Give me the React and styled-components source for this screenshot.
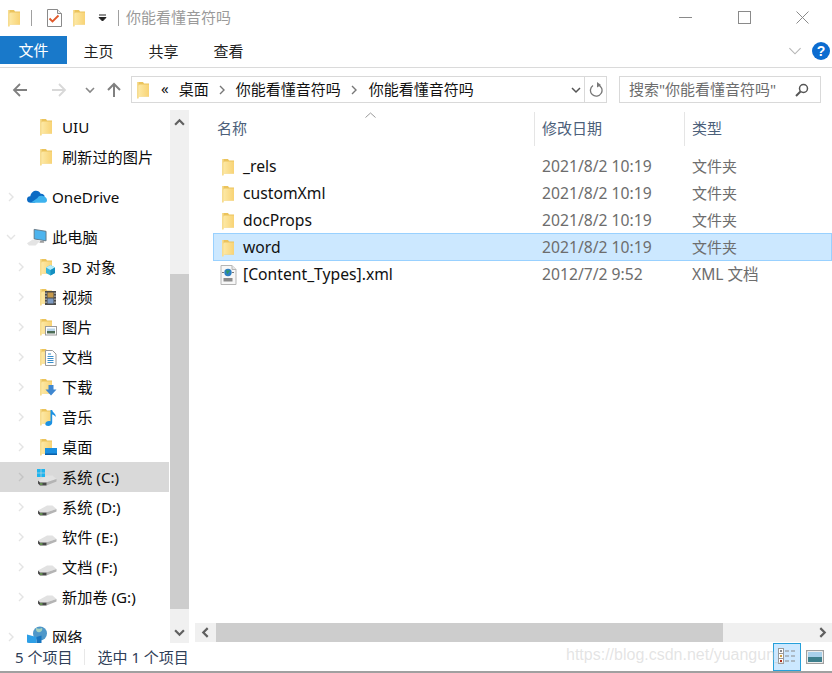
import React from 'react';
import styled, { createGlobalStyle } from 'styled-components';

const GlobalStyle = createGlobalStyle`
	html, body {
		margin: 0;
		padding: 0;
		background: #fff;
	}
`;

const Win = styled.div`
	width: 832px;
	height: 673px;
	position: relative;
	display: flex;
	flex-direction: column;
	overflow: hidden;
	background: #fff;
	color: #000;
	font-family: 'Noto Sans', 'Noto Sans CJK SC', sans-serif;
	font-size: 15px;
`;

const TitleBar = styled.div`
	height: 36px;
	display: flex;
	align-items: center;
	padding-left: 8px;
`;

const TitleSep = styled.div`
	width: 1px;
	height: 16px;
	background: #a0a0a0;
	margin: 0 ${(p) => p.$right || 15}px 0 ${(p) => p.$left || 11}px;
`;

const TitleGap = styled.div`
	width: ${(p) => p.$w}px;
	flex: none;
`;

const TitleText = styled.div`
	font-size: 15px;
	color: #9a9a9a;
	margin-left: -7px;
	padding-bottom: 3px;
`;

const WinButtons = styled.div`
	margin-left: auto;
	display: flex;
	align-items: center;
`;

const WinButton = styled.div`
	width: 58.5px;
	height: 30px;
	display: flex;
	align-items: center;
	justify-content: center;
	margin-top: -2px;
`;

const TabsRow = styled.div`
	height: 31px;
	display: flex;
	align-items: flex-start;
	border-bottom: 1px solid #dadada;
`;

const FileTab = styled.div`
	width: 67px;
	height: 28px;
	box-sizing: border-box;
	padding-bottom: 2px;
	background: #1979ca;
	color: #fff;
	display: flex;
	align-items: center;
	justify-content: center;
`;

const Tab = styled.div`
	width: 65px;
	height: 30px;
	box-sizing: border-box;
	padding-bottom: 2px;
	display: flex;
	align-items: center;
	justify-content: center;
	color: #222;
`;

const TabGroup = styled.div`
	display: flex;
	margin-left: -1px;
`;

const RibbonRight = styled.div`
	margin-left: auto;
	display: flex;
	align-items: center;
	gap: 10px;
	height: 30px;
	margin-right: 2px;
`;

const AddressRow = styled.div`
	height: 42px;
	display: flex;
	align-items: center;
	padding-top: 1px;
	box-sizing: border-box;
`;

const NavButtons = styled.div`
	width: 131px;
	padding-left: 12px;
	box-sizing: border-box;
	display: flex;
	align-items: center;
	flex: none;
`;

const NavBtn = styled.div`
	width: ${(p) => p.$w}px;
	display: flex;
	align-items: center;
	justify-content: flex-start;
`;

const Field = styled.div`
	height: 27px;
	box-sizing: border-box;
	border: 1px solid #d9d9d9;
	display: flex;
	align-items: center;
	color: #111;
`;

const AddressBox = styled(Field)`
	width: 476px;
	padding-left: 5px;
	flex: none;
`;

const Crumb = styled.span`
	margin: -3px ${(p) => p.$after || 0}px 0 ${(p) => p.$before || 0}px;
	white-space: nowrap;
	font-size: ${(p) => p.$size || 15}px;
`;

const AddressEnd = styled.div`
	margin-left: auto;
	height: 100%;
	display: flex;
	align-items: center;
`;

const RefreshBox = styled.div`
	width: 21px;
	height: 100%;
	margin-left: 3px;
	border-left: 1px solid #d9d9d9;
	display: flex;
	align-items: center;
	justify-content: center;
`;

const SearchBox = styled(Field)`
	width: 202px;
	margin-left: 12px;
	padding: 0 11px 0 9px;
	justify-content: space-between;
	color: #6d6d6d;
	font-size: 15px;
	flex: none;
`;

const SearchText = styled.span`
	margin-top: -2px;
`;

const Main = styled.div`
	flex: 1;
	display: flex;
	min-height: 0;
`;

const Sidebar = styled.div`
	width: 195px;
	flex: none;
	display: flex;
`;

const NavList = styled.div`
	width: 170px;
	padding-top: 2px;
	overflow: hidden;
	flex: none;
`;

const NavRow = styled.div`
	height: 30px;
	width: 169px;
	display: flex;
	align-items: center;
	box-sizing: border-box;
	padding-left: ${(p) => (p.$depth ? 13 : 3)}px;
	margin-top: ${(p) => (p.$gap ? 10 : 0)}px;
	background: ${(p) => (p.$active ? '#d9d9d9' : 'transparent')};
	white-space: nowrap;
	color: #0c0c0c;
`;

const NavLabel = styled.span`
	margin-top: ${(p) => (p.$latin ? 0 : -2)}px;
	font-size: 15.2px;
`;

const Chevron = styled.div`
	width: 16px;
	height: 16px;
	flex: none;
	display: flex;
	align-items: center;
	justify-content: center;
`;

const NavIconSlot = styled.div`
	flex: none;
	width: ${(p) => (p.$depth ? 17 : 20)}px;
	margin-left: ${(p) => (p.$depth ? 11 : 8)}px;
	margin-right: 5px;
	height: 20px;
	display: flex;
	align-items: center;
`;

const VScroll = styled.div`
	width: 19px;
	flex: none;
	background: #f0f0f0;
	display: flex;
	flex-direction: column;
	align-items: center;
`;

const ScrollEnd = styled.div`
	height: ${(p) => p.$size}px;
	width: 100%;
	flex: none;
	display: flex;
	align-items: center;
	justify-content: center;
`;

const VThumb = styled.div`
	width: 100%;
	height: 335px;
	margin-top: 140px;
	background: #cdcdcd;
	flex: none;
`;

const DownArrow = styled.div`
	margin-top: 12px;
`;

const Content = styled.div`
	flex: 1;
	min-width: 0;
	display: flex;
	flex-direction: column;
	position: relative;
`;

const SortArrow = styled.div`
	position: absolute;
	left: 170px;
	top: 2px;
	line-height: 0;
`;

const Columns = styled.div`
	display: grid;
	grid-template-columns: 322px 150px 1fr;
	margin-left: 18px;
`;

const HeaderRow = styled(Columns)`
	height: 36px;
	grid-template-columns: 321px 150px 1fr;
`;

const HeaderCell = styled.div`
	display: flex;
	align-items: center;
	padding: 0 0 3px ${(p) => p.$pad}px;
	color: #4c607a;
	border-left: ${(p) => (p.$sep ? '1px solid #e5e5e5' : '0')};
	margin-top: 2px;
	height: 34px;
	box-sizing: border-box;
`;

const FileList = styled.div`
	flex: 1;
	padding-top: 7px;
`;

const FileRow = styled(Columns)`
	height: ${(p) => (p.$selected ? 28 : 27)}px;
	margin-top: ${(p) => (p.$selected ? -1 : 0)}px;
	padding-top: ${(p) => (p.$selected ? 1 : 0)}px;
	box-sizing: border-box;
	align-items: center;
	background: ${(p) => (p.$selected ? '#cce8ff' : 'transparent')};
	box-shadow: ${(p) => (p.$selected ? 'inset 0 0 0 1px #99d1ff' : 'none')};
`;

const NameCell = styled.div`
	display: flex;
	align-items: center;
	padding-left: ${(p) => (p.$file ? 7 : 9)}px;
	color: #111;
	font-size: 15.7px;
`;

const NameText = styled.span`
	margin-top: -2px;
`;

const NameIcon = styled.div`
	width: ${(p) => (p.$file ? 23 : 21)}px;
	flex: none;
	display: flex;
	align-items: center;
`;

const MetaCell = styled.div`
	padding-left: 7px;
	margin-top: -2px;
	color: #6d6d6d;
	white-space: nowrap;
	font-size: ${(p) => p.$size || 15}px;
`;

const HScroll = styled.div`
	height: 19px;
	flex: none;
	margin-bottom: 1px;
	background: #f0f0f0;
	display: flex;
	align-items: center;
`;

const HThumb = styled.div`
	width: 507px;
	height: 100%;
	background: #cdcdcd;
`;

const HEnd = styled.div`
	width: ${(p) => p.$size}px;
	height: 100%;
	display: flex;
	align-items: center;
	justify-content: center;
	margin-left: ${(p) => (p.$auto ? 'auto' : '0')};
`;

const StatusBar = styled.div`
	height: 28px;
	flex: none;
	display: flex;
	align-items: center;
	padding-left: 15px;
	color: #2f4058;
	font-size: 15px;
	border-bottom: 2px solid #a0a0a0;
`;

const StatusText = styled.span`
	margin-top: -1px;
`;

const StatusSep = styled.div`
	width: 1px;
	height: 16px;
	background: #e8e8e8;
	margin: 0 12px 0 12px;
`;

const ViewButtons = styled.div`
	margin-left: auto;
	display: flex;
	align-items: center;
	height: 100%;
	margin-right: 3px;
`;

const ViewBtn = styled.div`
	width: 28px;
	height: 28px;
	box-sizing: border-box;
	display: flex;
	align-items: center;
	justify-content: center;
	background: ${(p) => (p.$on ? '#cce8ff' : 'transparent')};
	border: 1px solid ${(p) => (p.$on ? '#26a0da' : 'transparent')};
`;

const Watermark = styled.div`
	position: absolute;
	left: 566px;
	top: 646px;
	font-family: 'Liberation Sans', sans-serif;
	font-size: 16px;
	color: rgba(190, 190, 190, 0.42);
	white-space: nowrap;
	pointer-events: none;
`;

// folder with an optional overlay drawn by the caller
const Folder = ({ children, w = 17, h = 18 }) => (
	<svg width={w} height={h} viewBox='0 0 17 18' style={{ display: 'block', overflow: 'visible' }}>
		<defs>
			<linearGradient id='fold' x1='0' x2='1' y1='0' y2='0'>
				<stop offset='0' stopColor='#fdeaa8' />
				<stop offset='1' stopColor='#f8d375' />
			</linearGradient>
		</defs>
		<path d='M0 1h6l1 1.500h5V15.500H0z' fill='#ebc35c' />
		<path d='M2.500 3.500H12V15.500H2.500L.8 17.500V5z' fill='url(#fold)' />
		<path d='M0 1h1.600V17.500H0z' fill='#f6dc90' />
		{children}
	</svg>
);

const Overlays = {
	cube: (
		<g>
			<path d='M6 9.500l4.500-2.500 4.500 2.500v5.500l-4.500 2.500L6 15z' fill='#35b5dc' />
			<path d='M6 9.500l4.500-2.500 4.500 2.500-4.500 2.500z' fill='#b7ecf7' />
			<path d='M10.500 12l4.500-2.500V15l-4.500 2.500z' fill='#158fc0' />
		</g>
	),
	film: (
		<g>
			<rect x='5' y='3' width='11' height='14' fill='#4b4b4b' />
			<rect x='7.500' y='4.500' width='6' height='5' fill='#c69a4c' />
			<rect x='7.500' y='10.500' width='6' height='5' fill='#7e9bc3' />
			<path d='M6 4.500v1.500M6 7.500v1.500M6 10.500v1.500M6 13.500v1.500M15 4.500v1.500M15 7.500v1.500M15 10.500v1.500M15 13.500v1.500' stroke='#ddd' strokeWidth='1' />
		</g>
	),
	image: (
		<g>
			<rect x='5.500' y='8.500' width='11' height='8.500' fill='#fff' stroke='#9b9b9b' />
			<rect x='7' y='10.500' width='8' height='3' fill='#b8d4ea' />
			<rect x='7' y='13' width='8' height='2.500' fill='#4d6c56' />
		</g>
	),
	doc: (
		<g>
			<path d='M5.500 2.500h7l3.500 3.500v11.500H5.500z' fill='#fff' stroke='#9a9a9a' />
			<path d='M8 6h3M7.500 8.500h6M7.500 10.500h6M7.500 12.500h6M7.500 14.500h6' stroke='#3a8ecb' strokeWidth='1' />
		</g>
	),
	down: (
		<path d='M8.500 7h5v4.500h3l-5.500 6-5.500-6h3z' fill='#3f87d0' />
	),
	note: (
		<path d='M10.500 2h1.700c.3 3 4 3.300 3.500 7-1-1.800-2.400-2.500-3.500-2.600V14.500c0 2-2 3.500-4 3.500C6.300 18 5.300 17.200 5.300 16c0-1.700 2-3 3.700-3 .3 0 .9 0 1.500.3z' fill='#1c92e3' />
	),
	desk: (
		<g>
			<rect x='5' y='10' width='12' height='6' fill='#1a8fe0' />
			<rect x='5' y='15.500' width='12' height='1.500' fill='#0b5fa8' />
		</g>
	),
};

const Drive = ({ win }) => (
	<svg width='20' height='20' viewBox='0 0 20 20' style={{ display: 'block', marginLeft: -3, overflow: 'visible' }}>
		<path d='M1 13.500L10 8.500h5.500L19.500 12 9 15.500H3z' fill='#e2e2e2' />
		<path d='M9 15.500L19.500 12v2.500L9.500 18.500z' fill='#b4b4b4' />
		<path d='M1 13.500L3 15.500h6.500V18.500H3L1 16.500z' fill='#484848' />
		<rect x='3' y='16.500' width='2.500' height='1' fill='#7fd35f' />
		{win && (
			<g fill='#1eb4ee'>
				<rect x='0' y='2' width='3.700' height='3.700' />
				<rect x='4.300' y='2' width='3.700' height='3.700' />
				<rect x='0' y='6.300' width='3.700' height='3.700' />
				<rect x='4.300' y='6.300' width='3.700' height='3.700' />
			</g>
		)}
	</svg>
);

const Cloud = () => (
	<svg width='21' height='14' viewBox='0 0 21 14' style={{ display: 'block' }}>
		<path d='M4 13C1.500 13 0 11.500 0 9.500c0-2 1.600-3.300 3.500-3.200C4 2.500 6.800.5 9.500.5c2.200 0 4 1.200 4.800 3C17 3.300 18.500 5 18.500 6.500L8 13z' fill='#0c6bc4' />
		<path d='M4 13L11 8c1-1.800 2.700-2.500 4.300-2.200C18.500 6 21 8 21 10.500c0 1.500-1 2.500-2.500 2.500z' fill='#3db2ee' />
	</svg>
);

const Laptop = () => (
	<svg width='21' height='19' viewBox='0 0 21 19' style={{ display: 'block' }}>
		<path d='M7.500 1l12.500 2v10l-12.500-2z' fill='#4db4ee' stroke='#5e6f7c' strokeWidth='.9' />
		<path d='M0 15.500l6-4 8 1.500-5 5H2z' fill='#e4e4e4' />
		<path d='M14 13l4 .5v1.500h-5z' fill='#9c9c9c' />
	</svg>
);

const Globe = () => (
	<svg width='21' height='17' viewBox='0 0 21 17' style={{ display: 'block', overflow: 'visible' }}>
		<circle cx='13' cy='4.500' r='7' fill='#4e97c9' />
		<path d='M9 -1c2 1 4 1 6 0 1 1.500-.5 3.500-2 4-1.500 1-4.500 0-4-4z' fill='#a6d2c0' />
		<path d='M0 5.500l9.500 2.500v8l-9.500-2.500z' fill='#2e9fe6' />
		<path d='M9.500 8l5-1.500V14l-5 2z' fill='#1774bf' />
	</svg>
);

const XmlFile = () => (
	<svg width='17' height='20' viewBox='0 0 17 20' style={{ display: 'block' }}>
		<path d='M1 .5h11l4 4v15H1z' fill='#f7f7f7' stroke='#b5b5b5' />
		<path d='M12 .5v4h4' fill='#e6e6e6' stroke='#b5b5b5' />
		<circle cx='8' cy='7.500' r='3.700' fill='#2c7fc2' />
		<path d='M6 5c1 .8 2.500 .8 3.500 0 .5 1.500-.5 2-1 2.500-.3 1-1 1.500-1.500 1.500 0-1.500-1-2-1-4z' fill='#2f9a62' />
		<path d='M2 7.500h2M12 7.500h2' stroke='#777' />
		<rect x='3.500' y='13' width='9' height='3.500' fill='#8b8b8b' />
	</svg>
);

const Chev = ({ dir = 'right', color = '#e4e4e4', size = 10, sw = 1.4 }) => {
	const paths = {
		right: 'M3 1l4 4-4 4',
		left: 'M7 1L3 5l4 4',
		down: 'M1 3l4 4 4-4',
		up: 'M1 7l4-4 4 4',
	};
	return (
		<svg width={size} height={size} viewBox='0 0 10 10' style={{ display: 'block' }}>
			<path d={paths[dir]} fill='none' stroke={color} strokeWidth={sw} />
		</svg>
	);
};

const Arrow = ({ color, dir }) => (
	<svg width='16' height='16' viewBox='0 0 16 16' style={{ display: 'block' }}>
		{dir === 'up'
			? <path d='M8 15V2M2 8l6-6 6 6' fill='none' stroke={color} strokeWidth='2' />
			: <path d={dir === 'left' ? 'M15 8H2M8 2L2 8l6 6' : 'M1 8h13M8 2l6 6-6 6'} fill='none' stroke={color} strokeWidth='1.800' />}
	</svg>
);

const CheckDoc = () => (
	<svg width='15' height='18' viewBox='0 0 15 18' style={{ display: 'block' }}>
		<path d='M.5.500h10l4 4v13H.5z' fill='#fff' stroke='#8a8a8a' />
		<path d='M10.500.500v4h4' fill='#eee' stroke='#8a8a8a' />
		<path d='M2.500 9.500l3 3 6-6' fill='none' stroke='#e0582a' strokeWidth='1.800' />
	</svg>
);

const Help = () => (
	<svg width='18' height='18' viewBox='0 0 18 18' style={{ display: 'block' }}>
		<circle cx='9' cy='9' r='9' fill='#0c6cd0' />
		<text x='9' y='14' textAnchor='middle' fontSize='14' fontWeight='700' fill='#fff' fontFamily='Liberation Sans'>?</text>
	</svg>
);

const DetailsIcon = () => (
	<svg width='18' height='22' viewBox='0 0 18 22' style={{ display: 'block' }}>
		<rect x='0.500' y='2.500' width='5' height='5' fill='#fff' stroke='#999' />
		<rect x='0.500' y='7.500' width='5' height='5' fill='#fff' stroke='#999' />
		<rect x='0.500' y='12.500' width='5' height='5' fill='#fff' stroke='#999' />
		<rect x='2' y='4' width='2' height='2' fill='#888' />
		<rect x='2' y='9' width='2' height='2' fill='#d0a040' />
		<rect x='2' y='14' width='2' height='2' fill='#b03020' />
		<path d='M7 5h4M13 5h4M7 10h4M13 10h4M7 15h4M13 15h4' stroke='#8a8a8a' />
	</svg>
);

const LargeIcon = () => (
	<svg width='18' height='14' viewBox='0 0 18 14' style={{ display: 'block' }}>
		<rect x='.5' y='.5' width='17' height='13' fill='#fff' stroke='#a0a0a0' strokeWidth='1.400' />
		<rect x='2' y='2' width='14' height='5' fill='#a8d0ea' />
		<rect x='2' y='7' width='14' height='5' fill='#3d7f8c' />
	</svg>
);

const navItems = [
	{ label: 'UIU', depth: 1, icon: 'folder', noChev: true, latin: true },
	{ label: '刷新过的图片', depth: 1, icon: 'folder', noChev: true },
	{ label: 'OneDrive', depth: 0, icon: 'cloud', gap: true, latin: true },
	{ label: '此电脑', depth: 0, icon: 'pc', gap: true, open: true },
	{ label: '3D 对象', depth: 1, overlay: 'cube' },
	{ label: '视频', depth: 1, overlay: 'film' },
	{ label: '图片', depth: 1, overlay: 'image' },
	{ label: '文档', depth: 1, overlay: 'doc' },
	{ label: '下载', depth: 1, overlay: 'down' },
	{ label: '音乐', depth: 1, overlay: 'note' },
	{ label: '桌面', depth: 1, overlay: 'desk' },
	{ label: '系统 (C:)', depth: 1, icon: 'win', active: true },
	{ label: '系统 (D:)', depth: 1, icon: 'drive' },
	{ label: '软件 (E:)', depth: 1, icon: 'drive' },
	{ label: '文档 (F:)', depth: 1, icon: 'drive' },
	{ label: '新加卷 (G:)', depth: 1, icon: 'drive' },
	{ label: '网络', depth: 0, icon: 'net', gap: true },
];

const files = [
	{ name: '_rels', date: '2021/8/2 10:19', type: '文件夹' },
	{ name: 'customXml', date: '2021/8/2 10:19', type: '文件夹' },
	{ name: 'docProps', date: '2021/8/2 10:19', type: '文件夹' },
	{ name: 'word', date: '2021/8/2 10:19', type: '文件夹', selected: true },
	{ name: '[Content_Types].xml', date: '2012/7/2 9:52', type: 'XML 文档', file: true },
];

const navIcon = (item) => {
	if (item.icon === 'cloud') return <Cloud />;
	if (item.icon === 'pc') return <Laptop />;
	if (item.icon === 'net') return <Globe />;
	if (item.icon === 'win') return <Drive win />;
	if (item.icon === 'drive') return <Drive />;
	return <Folder>{item.overlay && Overlays[item.overlay]}</Folder>;
};

export default function App() {
	return (
		<Win>
			<GlobalStyle />
			<TitleBar>
				<Folder />
				<TitleSep $left={6} $right={15} />
				<CheckDoc />
				<TitleGap $w={11} />
				<Folder />
				<TitleGap $w={8} />
				<svg width='9' height='8' viewBox='0 0 9 8' style={{ display: 'block' }}>
					<path d='M1 1h7M1 3.500h7L4.500 7z' stroke='#222' strokeWidth='1' fill='#222' />
				</svg>
				<TitleSep $left={11} $right={14} />
				<TitleText>你能看懂音符吗</TitleText>
				<WinButtons>
					<WinButton>
						<svg width='13' height='13' viewBox='0 0 13 13'><path d='M0 6.500h13' stroke='#8a8a8a' /></svg>
					</WinButton>
					<WinButton>
						<svg width='13' height='13' viewBox='0 0 13 13'><rect x='.5' y='.5' width='12' height='12' fill='none' stroke='#8a8a8a' /></svg>
					</WinButton>
					<WinButton>
						<svg width='13' height='13' viewBox='0 0 13 13'><path d='M.5.500l12 12M12.500.500l-12 12' stroke='#8a8a8a' /></svg>
					</WinButton>
				</WinButtons>
			</TitleBar>
			<TabsRow>
				<FileTab>文件</FileTab>
				<TabGroup>
					<Tab>主页</Tab>
					<Tab>共享</Tab>
					<Tab>查看</Tab>
				</TabGroup>
				<RibbonRight>
					<Chev dir='down' color='#b5b5b5' size={14} sw={.8} />
					<Help />
				</RibbonRight>
			</TabsRow>
			<AddressRow>
				<NavButtons>
					<NavBtn $w={39}><Arrow color='#808080' dir='left' /></NavBtn>
					<NavBtn $w={34}><Arrow color='#d8d8d8' dir='right' /></NavBtn>
					<NavBtn $w={21}><Chev dir='down' color='#888' sw={1.6} /></NavBtn>
					<NavBtn $w={20}><Arrow color='#808080' dir='up' /></NavBtn>
				</NavButtons>
				<AddressBox>
					<Folder />
					<Crumb $before={7} $after={10} $size={15}>«</Crumb>
					<Crumb $after={8}>桌面</Crumb>
					<Chev color='#777' />
					<Crumb $before={9} $after={8}>你能看懂音符吗</Crumb>
					<Chev color='#777' />
					<Crumb $before={10}>你能看懂音符吗</Crumb>
					<AddressEnd>
						<Chev dir='down' color='#555' sw={1.5} />
						<RefreshBox>
							<svg width='15' height='15' viewBox='0 0 15 15'>
								<path d='M5 3.500A5.800 5.800 0 1 0 10 2.800' fill='none' stroke='#777' strokeWidth='1.300' />
								<path d='M9 0v5.500L13 3z' fill='#777' />
							</svg>
						</RefreshBox>
					</AddressEnd>
				</AddressBox>
				<SearchBox>
					<SearchText>搜索"你能看懂音符吗"</SearchText>
					<svg width='14' height='14' viewBox='0 0 14 14'>
						<circle cx='8.500' cy='5.500' r='4' fill='none' stroke='#555' strokeWidth='1.500' />
						<path d='M5.500 8.500L1 13' stroke='#555' strokeWidth='2' />
					</svg>
				</SearchBox>
			</AddressRow>
			<Main>
				<Sidebar>
					<NavList>
						{navItems.map((item) => (
							<NavRow key={item.label} $depth={item.depth} $gap={item.gap} $active={item.active}>
								<Chevron>
									{!item.noChev && <Chev dir={item.open ? 'down' : 'right'} color={item.active ? '#c4c4c4' : '#e4e4e4'} />}
								</Chevron>
								<NavIconSlot $depth={item.depth}>{navIcon(item)}</NavIconSlot>
								<NavLabel $latin={item.latin}>{item.label}</NavLabel>
							</NavRow>
						))}
					</NavList>
					<VScroll>
						<ScrollEnd $size={24}><Chev dir='up' color='#606060' sw={2} size={11} /></ScrollEnd>
						<VThumb />
						<ScrollEnd $size={34}>
							<DownArrow><Chev dir='down' color='#606060' sw={2} size={11} /></DownArrow>
						</ScrollEnd>
					</VScroll>
				</Sidebar>
				<Content>
					<SortArrow><svg width='11' height='6' viewBox='0 0 11 6'><path d='M.5 5.500l5-4.500 5 4.500' fill='none' stroke='#999' /></svg></SortArrow>
					<HeaderRow>
						<HeaderCell $pad={4}>名称</HeaderCell>
						<HeaderCell $pad={7} $sep>修改日期</HeaderCell>
						<HeaderCell $pad={7} $sep>类型</HeaderCell>
					</HeaderRow>
					<FileList>
						{files.map((f) => (
							<FileRow key={f.name} $selected={f.selected}>
								<NameCell $file={f.file}>
									<NameIcon $file={f.file}>
										{f.file ? <XmlFile /> : <Folder />}
									</NameIcon>
									<NameText>{f.name}</NameText>
								</NameCell>
								<MetaCell $size={15.7}>{f.date}</MetaCell>
								<MetaCell $size={f.file ? 15.6 : 15}>{f.type}</MetaCell>
							</FileRow>
						))}
					</FileList>
					<HScroll>
						<HEnd $size={21}><Chev dir='left' color='#606060' sw={2} size={11} /></HEnd>
						<HThumb />
						<HEnd $size={19} $auto><Chev dir='right' color='#606060' sw={2} size={11} /></HEnd>
					</HScroll>
				</Content>
			</Main>
			<StatusBar>
				<StatusText>5 个项目</StatusText>
				<StatusSep />
				<StatusText>选中 1 个项目</StatusText>
				<ViewButtons>
					<ViewBtn $on><DetailsIcon /></ViewBtn>
					<ViewBtn><LargeIcon /></ViewBtn>
				</ViewButtons>
			</StatusBar>
			<Watermark>https://blog.csdn.net/yuangun_</Watermark>
		</Win>
	);
}
